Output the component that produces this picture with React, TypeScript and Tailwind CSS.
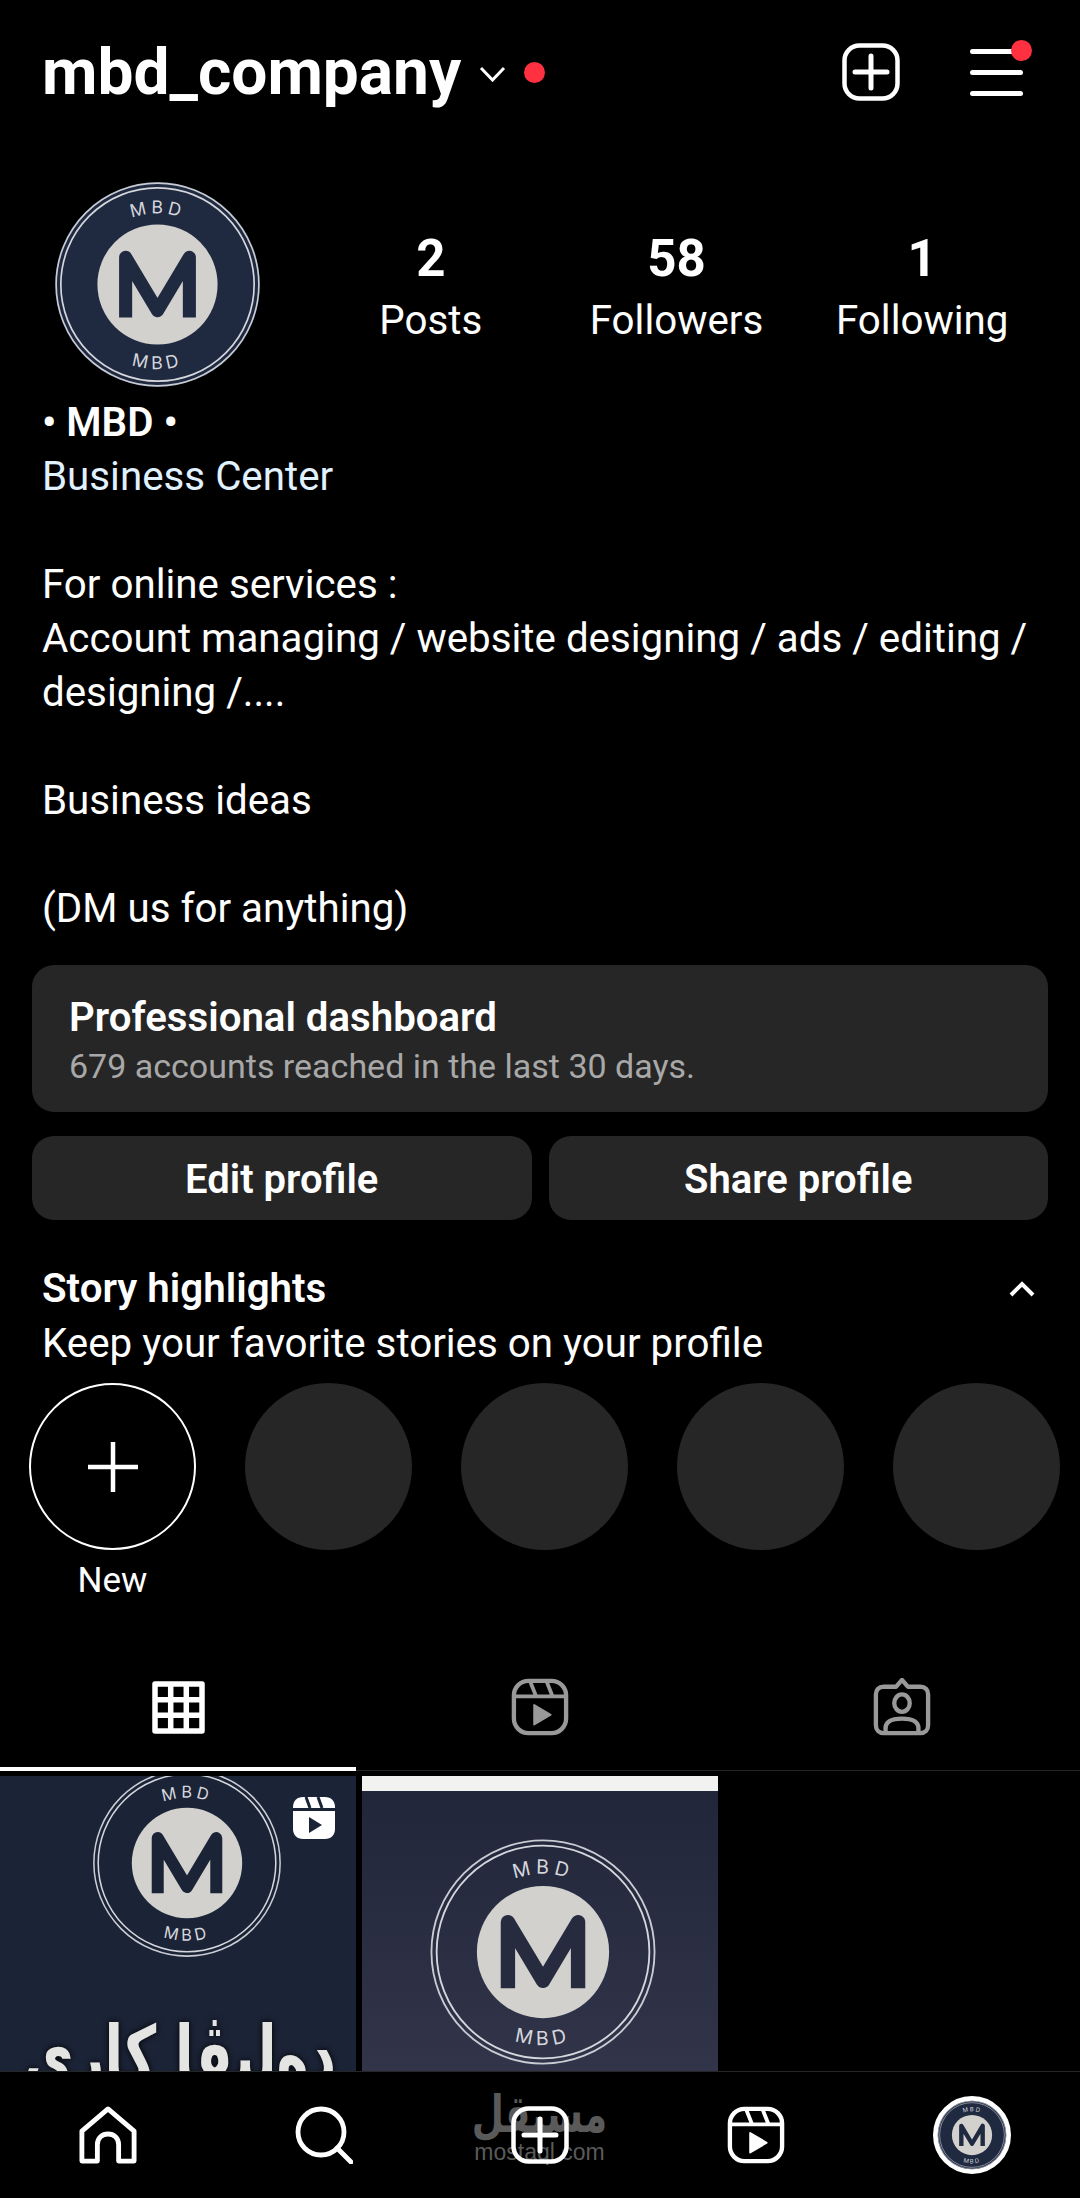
import React from 'react'

const roboto = "font-['Roboto',sans-serif]"

function Logo({ size, bg = '#1f2940', id, disc = true }: { size: number; bg?: string; id: string; disc?: boolean }) {
  return (
    <svg width={size} height={size} viewBox="0 0 200 200" className="block shrink-0">
      {disc && <circle cx="100" cy="100" r="98" fill={bg} />}
      <circle cx="100" cy="100" r="97" fill="none" stroke="#c9ccd3" strokeWidth="1.6" />
      <circle cx="100" cy="100" r="92.5" fill="none" stroke="#d5d7dc" strokeWidth="1.6" />
      <circle cx="100" cy="100" r="57.5" fill="#d2d1ce" />
      <path d="M69.5 131.5V74L100 125L130.5 74V131.5" fill="none" stroke={bg} strokeWidth="12.5" strokeLinejoin="round" />
      <path id={id + 'top'} d="M32 100A68 68 0 0 1 168 100" fill="none" />
      <path id={id + 'bot'} d="M19 100A81 81 0 0 0 181 100" fill="none" />
      <text fontFamily="Inter, sans-serif" fontSize="17" fill="#d5d7dc" letterSpacing="4" textAnchor="middle">
        <textPath href={'#' + id + 'top'} startOffset="50%">MBD</textPath>
      </text>
      <text fontFamily="Inter, sans-serif" fontSize="17" fill="#d5d7dc" letterSpacing="4" textAnchor="middle">
        <textPath href={'#' + id + 'bot'} startOffset="50%">MBD</textPath>
      </text>
    </svg>
  )
}

function PlusBox() {
  return (
    <svg width="58" height="58" viewBox="0 0 58 58" fill="none" stroke="#fff" strokeLinecap="round" className="block">
      <rect x="2.5" y="2.5" width="53" height="53" rx="15" strokeWidth="4.5" />
      <path d="M29 13V45M13 29H45" strokeWidth="5" />
    </svg>
  )
}

function ReelIcon({ color = '#fff' }: { color?: string }) {
  return (
    <svg width="58" height="58" viewBox="0 0 60 60" fill="none" stroke={color} className="block">
      <rect x="3" y="3" width="54" height="54" rx="15" strokeWidth="4.5" />
      <path d="M3 19H57M20 4L26 19M37 4L43 19" strokeWidth="4" />
      <path d="M24 28L41 38L24 48Z" fill={color} stroke={color} strokeWidth="2" strokeLinejoin="round" />
    </svg>
  )
}

const stats = [
  { n: '2', l: 'Posts' },
  { n: '58', l: 'Followers' },
  { n: '1', l: 'Following' },
]

export default function App() {
  return (
    <div className={`w-[1080px] h-[2198px] bg-black text-white overflow-hidden flex flex-col ${roboto}`}>
      {/* Header */}
      <div className="flex items-center h-[72px] mt-[36px] pl-[42px]">
        <span className="text-[64px] font-bold leading-none pt-[2px]">mbd_company</span>
        <svg width="27" height="16" viewBox="0 0 27 16" fill="none" stroke="#fff" strokeWidth="3" className="ml-[18px] mt-[4px]">
          <path d="M2 2L13.5 14L25 2" />
        </svg>
        <span className="w-[21px] h-[21px] rounded-full bg-[#ff3040] ml-[18px]" />
        <div className="ml-auto mr-[57px] flex items-center gap-[70px]">
          <PlusBox />
          <div className="relative w-[53px] flex flex-col gap-[16px]">
            <span className="h-[5px] bg-white rounded-full" />
            <span className="h-[5px] bg-white rounded-full" />
            <span className="h-[5px] bg-white rounded-full" />
            <span className="absolute -top-[9px] -right-[9px] w-[21px] h-[21px] rounded-full bg-[#ff3040]" />
          </div>
        </div>
      </div>

      {/* Avatar and counts */}
      <div className="flex items-center mt-[72px] pl-[53px]">
        <Logo size={209} id="a" />
        <div className="flex-1 h-[125px] pt-[7px]">
          <div className="flex h-full pl-[46px] pr-[35px]">
            {stats.map((s) => (
              <div key={s.l} className="flex-1 flex flex-col items-center">
                <span className="text-[51px] font-bold leading-[60px]">{s.n}</span>
                <span className="text-[40.3px] leading-[54px] mt-[5px] whitespace-nowrap">{s.l}</span>
              </div>
            ))}
          </div>
        </div>
      </div>

      {/* Bio */}
      <div className="px-[42px] text-[40.3px] leading-[54px] mt-[7px] -mb-px whitespace-nowrap">
        <p className="font-semibold">• MBD •</p>
        <p className="text-[#e0f1ff]">Business Center</p>
        <p>&nbsp;</p>
        <p>For online services :</p>
        <p>Account managing / website designing / ads / editing /</p>
        <p>designing /....</p>
        <p>&nbsp;</p>
        <p>Business ideas</p>
        <p>&nbsp;</p>
        <p>(DM us for anything)</p>
      </div>

      {/* Dashboard */}
      <div className="mx-[32px] mt-[30px] h-[147px] rounded-[22px] bg-[#262626] pl-[37px] pr-[38px] pt-[2px] flex flex-col justify-center">
        <p className="text-[40.2px] font-semibold leading-[52px]">Professional dashboard</p>
        <p className="text-[34px] leading-[44px] text-[#a8a8a8]">679 accounts reached in the last 30 days.</p>
      </div>
      <div className="mx-[32px] mt-[24px] flex gap-[17px]">
        <div className="flex-1 h-[84px] rounded-[22px] bg-[#262626] flex items-center justify-center pt-[3px] text-[40px] font-semibold">Edit profile</div>
        <div className="flex-1 h-[84px] rounded-[22px] bg-[#262626] flex items-center justify-center pt-[3px] text-[40px] font-semibold">Share profile</div>
      </div>

      {/* Highlights */}
      <div className="flex items-center justify-between mt-[42px] px-[42px]">
        <span className="text-[40.3px] font-semibold leading-[54px]">Story highlights</span>
        <svg width="26" height="16" viewBox="0 0 26 16" fill="none" stroke="#fff" strokeWidth="4" className="mr-[3px]">
          <path d="M2 14L13 3L24 14" />
        </svg>
      </div>
      <p className="pl-[42px] text-[40.3px] leading-[54px] pt-px -mb-px">Keep your favorite stories on your profile</p>
      <div className="flex gap-[49px] pl-[29px] mt-[13px]">
        <div className="flex flex-col items-center w-[167px] shrink-0">
          <div className="w-[167px] h-[167px] rounded-full border-2 border-white flex items-center justify-center">
            <svg width="50" height="50" viewBox="0 0 50 50" stroke="#fff" strokeWidth="4.5"><path d="M25 0V50M0 25H50" /></svg>
          </div>
          <span className="text-[35px] leading-[44px] mt-[9px]">New</span>
        </div>
        {[0, 1, 2, 3].map((i) => (
          <div key={i} className="w-[167px] h-[167px] rounded-full bg-[#262626] shrink-0" />
        ))}
      </div>

      {/* Tabs */}
      <div className="mt-[44px] flex h-[124px] shrink-0 border-b border-[#262626]">
        <div className="w-[356px] flex items-center justify-center border-b-[4px] border-white -mb-px">
          <svg width="53" height="53" viewBox="0 0 53 53" fill="none" stroke="#fff" strokeWidth="5.5" strokeLinejoin="round">
            <rect x="3" y="3" width="47" height="47" />
            <path d="M18.7 3V50M34.3 3V50M3 18.7H50M3 34.3H50" />
          </svg>
        </div>
        <div className="flex-1 flex items-center justify-center pb-[4px]">
          <ReelIcon color="#999999" />
        </div>
        <div className="w-[356px] flex items-center justify-center pb-[4px]">
          <svg width="58" height="58" viewBox="0 0 60 60" fill="none" stroke="#999999" strokeWidth="4.5">
            <path d="M11 9H24L30 2L36 9H49C54 9 57 12 57 17V49C57 54 54 57 49 57H11C6 57 3 54 3 49V17C3 12 6 9 11 9Z" strokeLinejoin="round" />
            <ellipse cx="30" cy="26" rx="8" ry="9" />
            <path d="M13 57V52C13 45 20 42 30 42C40 42 47 45 47 52V57" />
          </svg>
        </div>
      </div>

      {/* Grid */}
      <div className="flex-1 min-h-0 overflow-hidden mt-[5px] flex gap-[6px]">
        <div className="w-[356px] h-full bg-[#1b2336] relative overflow-hidden flex flex-col items-center">
          <div className="-mt-[9px] ml-[18px]">
            <Logo size={192} bg="#1b2336" id="b" disc={false} />
          </div>
          <span dir="rtl" className="mt-[71px] ml-[4px] text-[54px] leading-none font-bold font-['DejaVu_Sans',sans-serif] text-[#e4e4e2] whitespace-nowrap scale-y-150 [text-shadow:0_0_5px_#000]">دەلیڤا کاری</span>
          <div className="absolute top-[21px] right-[21px]">
            <svg width="42" height="42" viewBox="0 0 42 42">
              <path d="M10 0H32C38 0 42 4 42 10V11H0V10C0 4 4 0 10 0Z" fill="#fff" />
              <path d="M0 14H42V32C42 38 38 42 32 42H10C4 42 0 38 0 32Z" fill="#fff" />
              <path d="M16 20L29 28L16 36Z" fill="#1b2336" />
              <path d="M13 0L17 11M25 0L29 11" stroke="#1b2336" strokeWidth="3" />
            </svg>
          </div>
        </div>
        <div className="w-[356px] h-full bg-gradient-to-b from-[#20253a] to-[#32354a] flex flex-col items-center overflow-hidden">
          <div className="w-full h-[15px] bg-[#f2f2f0] shrink-0" />
          <div className="mt-[46px] ml-[6px]">
            <Logo size={230} bg="#262b40" id="c" disc={false} />
          </div>
        </div>
      </div>

      {/* Bottom nav */}
      <div className="relative h-[127px] shrink-0 border-t border-[#262626] bg-black flex items-center">
        <div className="absolute left-[474px] top-[20px] w-[131px] flex flex-col items-center text-[#5a5a5a]">
          <span className="font-['DejaVu_Sans',sans-serif] font-bold text-[37px] leading-[46px] scale-y-[1.4]">مستقل</span>
          <span className="font-['Liberation_Sans',sans-serif] text-[23px] leading-[24px] mt-[2px] whitespace-nowrap">mostaql.com</span>
        </div>
        <div className="relative w-full flex items-center">
          <div className="flex-1 flex justify-center">
            <svg width="58" height="58" viewBox="0 0 60 60" fill="none" stroke="#fff" strokeWidth="5" strokeLinejoin="round">
              <path d="M3 57V26L30 3L57 26V57H41V40C41 33 36 29 30 29C24 29 19 33 19 40V57Z" />
            </svg>
          </div>
          <div className="flex-1 flex justify-center">
            <svg width="58" height="58" viewBox="0 0 58 58" fill="none" stroke="#fff" strokeWidth="4.8" strokeLinecap="round">
              <circle cx="26" cy="26" r="23" />
              <path d="M42 42L56 56" />
            </svg>
          </div>
          <div className="flex-1 flex justify-center"><PlusBox /></div>
          <div className="flex-1 flex justify-center"><ReelIcon /></div>
          <div className="flex-1 flex justify-center">
            <div className="rounded-full border-[4px] border-white bg-white">
              <Logo size={70} id="d" />
            </div>
          </div>
        </div>
      </div>
    </div>
  )
}
